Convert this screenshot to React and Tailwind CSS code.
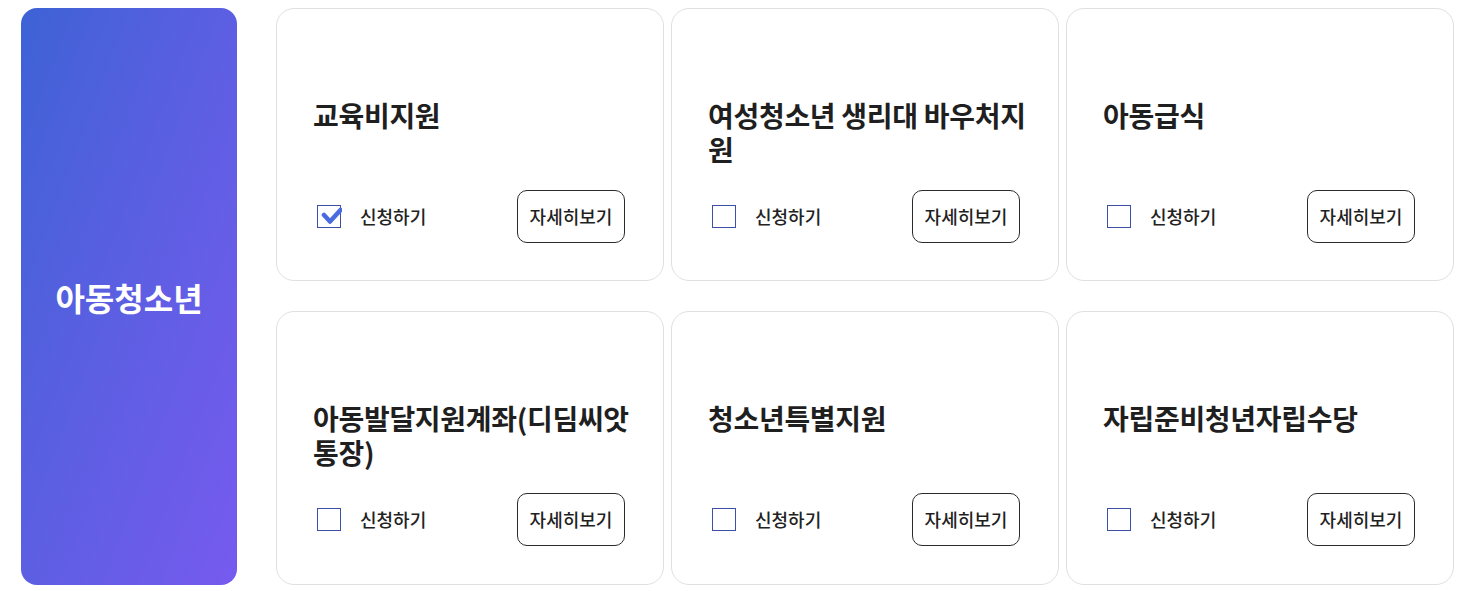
import { useState } from 'react';

const FONT = "font-['Noto_Sans_CJK_KR','Noto_Sans',sans-serif]";

const PROGRAMS = [
  { id: 1, title: '교육비지원', checked: true },
  { id: 2, title: '여성청소년 생리대 바우처지원', checked: false },
  { id: 3, title: '아동급식', checked: false },
  { id: 4, title: '아동발달지원계좌(디딤씨앗통장)', checked: false },
  { id: 5, title: '청소년특별지원', checked: false },
  { id: 6, title: '자립준비청년자립수당', checked: false },
];

function CheckBox({ checked, onToggle }) {
  return (
    <button
      type="button"
      onClick={onToggle}
      aria-pressed={checked}
      className="relative h-[23px] w-[24px] shrink-0 border border-[#3d4fa6] bg-white"
    >
      {checked && (
        <svg
          viewBox="0 0 24 24"
          className="absolute left-[0px] top-[-1px] h-[24px] w-[24px]"
          fill="none"
        >
          <path
            d="M6 10 L12 16.5 L22.5 5"
            stroke="#4a6ae0"
            strokeWidth="4.5"
            strokeLinecap="round"
            strokeLinejoin="round"
          />
        </svg>
      )}
    </button>
  );
}

function ProgramCard({ program, checked, onToggle }) {
  return (
    <div className="flex h-full flex-col rounded-[18px] border border-[#e0e0e0] bg-white pl-[36px] pr-[30px] pt-[89px]">
      <h3 className="h-[82px] text-[28px] font-bold leading-[34px] tracking-[-0.3px] text-[#1f1f1f]">
        {program.title}
      </h3>

      <div className="mt-[10px] flex items-center justify-between pr-[8px]">
        <label className="flex items-center gap-[19px] pl-[4px]">
          <CheckBox checked={checked} onToggle={onToggle} />
          <span className="text-[18px] font-medium text-[#222]">신청하기</span>
        </label>

        <button
          type="button"
          className="h-[53px] w-[108px] rounded-[10px] border border-[#2b2b2b] bg-white text-[18px] font-medium text-[#1f1f1f]"
        >
          자세히보기
        </button>
      </div>
    </div>
  );
}

export default function App() {
  const [selected, setSelected] = useState(
    Object.fromEntries(PROGRAMS.map((p) => [p.id, p.checked]))
  );

  const toggle = (id) =>
    setSelected((current) => ({ ...current, [id]: !current[id] }));

  return (
    <div className={`flex items-start bg-white pl-[21px] pr-[21px] pt-[8px] ${FONT}`}>
      <aside className="flex h-[577px] w-[216px] shrink-0 items-center justify-center rounded-[16px] bg-gradient-to-br from-[#3d62d6] to-[#765aef]">
        <h2 className="text-[32px] font-bold text-white">아동청소년</h2>
      </aside>

      <div className="ml-[39px] grid flex-1 grid-cols-3 grid-rows-[273px_274px] gap-x-[7px] gap-y-[30px]">
        {PROGRAMS.map((program) => (
          <ProgramCard
            key={program.id}
            program={program}
            checked={selected[program.id]}
            onToggle={() => toggle(program.id)}
          />
        ))}
      </div>
    </div>
  );
}
